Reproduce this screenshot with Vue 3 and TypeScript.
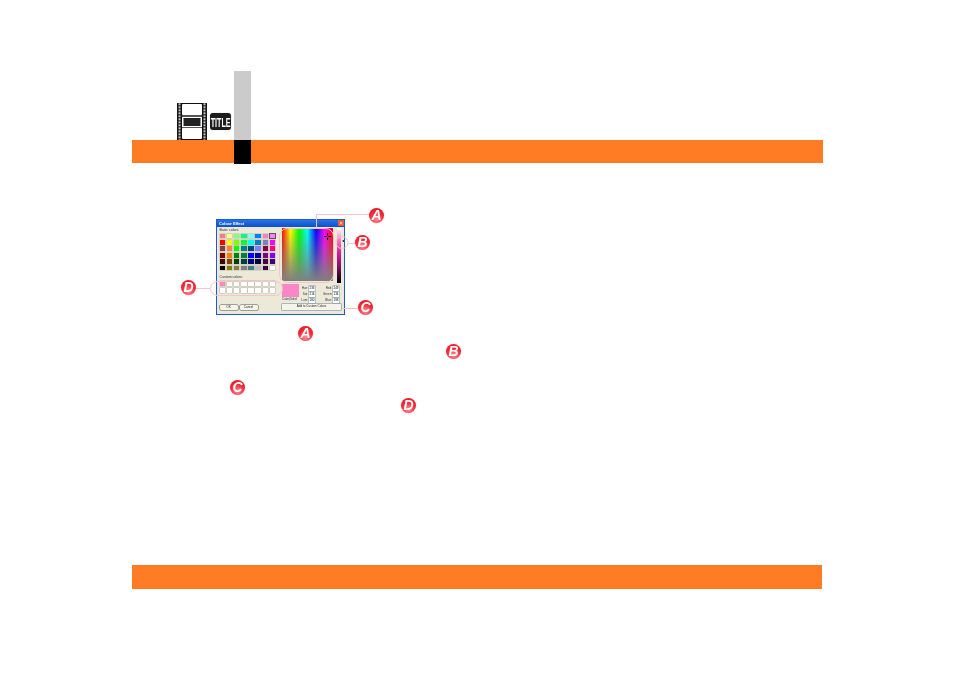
<script setup lang="ts">
const basic: string[] = [
  '#f08080','#ffff80','#80ff80','#00ff80','#80ffff','#0080ff','#ff80c0','#ff80ff',
  '#ff0000','#ffff00','#80ff00','#00ff40','#00ffff','#0080c0','#8080c0','#ff00ff',
  '#804040','#ff8040','#00ff00','#008080','#004080','#8080ff','#800040','#ff0080',
  '#800000','#ff8000','#008000','#008040','#0000ff','#0000a0','#800080','#8000ff',
  '#400000','#804000','#004000','#004040','#000080','#000040','#400040','#400080',
  '#000000','#808000','#808040','#808080','#408080','#c0c0c0','#400040','#ffffff'
]
const custom: string[] = Array.from({ length: 16 }, (_, i) => (i === 0 ? '#f986c6' : '#ffffff'))
const fields = [
  [{ l: 'Hue:', v: '233' }, { l: 'Red:', v: '249' }],
  [{ l: 'Sat:', v: '216' }, { l: 'Green:', v: '134' }],
  [{ l: 'Lum:', v: '180' }, { l: 'Blue:', v: '198' }]
]
</script>

<template>
  <main class="page">
    <header class="head">
      <div class="icons">
        <svg class="film" width="30" height="37" viewBox="0 0 30 37">
          <defs>
            <pattern id="holes" x="0" y="0.500" width="3" height="3" patternUnits="userSpaceOnUse">
              <rect x="0" y="0" width="3" height="1.500" fill="#fff" />
            </pattern>
          </defs>
          <rect width="30" height="37" fill="#111" />
          <rect x="1.500" y="0" width="2" height="37" fill="url(#holes)" />
          <rect x="26.500" y="0" width="2" height="37" fill="url(#holes)" />
          <rect x="5" y="12" width="20" height="14" fill="#555" />
          <g fill="#fff">
            <rect x="5" y="1" width="20" height="11" rx="1" />
            <rect x="5" y="25" width="20" height="11" rx="1" />
            <rect x="5" y="14" width="20" height="10" />
          </g>
          <rect x="6.500" y="15" width="17" height="8" fill="#222" />
        </svg>
        <div class="title-chip"><span>TITLE</span></div>
      </div>
      <div class="tab"></div>
    </header>
    <div class="band">
      <div class="tab-end"></div>
    </div>

    <section class="figure">
      <div class="dialog">
        <div class="titlebar"><span>Colour Effect</span><i class="close">×</i></div>
        <div class="left">
          <div class="cap">Basic colors:</div>
          <div class="swatches basic">
            <b v-for="(c, i) in basic" :key="i" :class="{ sel: i === 7 }" :style="{ background: c }"></b>
          </div>
          <div class="cap cap2">Custom colors:</div>
          <div class="swatches custom">
            <b v-for="(c, i) in custom" :key="i" :style="{ background: c }"></b>
          </div>
          <div class="btns"><button>OK</button><button>Cancel</button></div>
        </div>
        <div class="right">
          <div class="pickrow">
            <div class="spectrum"><div class="fade"></div><svg class="cross" width="7" height="7" viewBox="0 0 7 7"><path d="M3.500 0v2.500M3.500 4.500V7M0 3.500h2.500M4.500 3.500H7" stroke="#000" fill="none" /></svg></div>
            <div class="lum"></div>
            <div class="arrow"></div>
          </div>
          <div class="inforow">
            <div class="solidcol"><div class="solid"></div><span>Color|Solid</span></div>
            <div class="vals">
              <div v-for="(r, i) in fields" :key="i" class="valrow">
                <template v-for="f in r" :key="f.l"><span class="lab">{{ f.l }}</span><span class="inp">{{ f.v }}</span></template>
              </div>
            </div>
          </div>
          <button class="add">Add to Custom Colors</button>
        </div>
      </div>

      <!-- callouts over the screenshot, drawn in page coordinates -->
      <svg class="callouts" width="954" height="170" viewBox="0 163 954 170">
        <g fill="none" stroke="#f8c4c8" stroke-width="1">
          <path d="M316.500 228V214.500H370" />
          <rect x="279.500" y="228.500" width="54" height="54" rx="8" />
          <path d="M195 288.500H210" />
          <rect x="210.500" y="281.500" width="72" height="14" rx="7" />
          <circle cx="342" cy="242.500" r="6" />
          <path d="M348 243.500H356" />
          <path d="M342 308.500H358" />
        </g>
      </svg>
      <span class="badge pa">A</span>
      <span class="badge pb">B</span>
      <span class="badge pc">C</span>
      <span class="badge pd">D</span>
    </section>

    <section class="notes">
      <div class="line la"><span class="badge">A</span></div>
      <div class="line lb"><span class="badge">B</span></div>
      <div class="line"></div>
      <div class="line lc"><span class="badge">C</span></div>
      <div class="line ld"><span class="badge">D</span></div>
    </section>

    <footer class="foot"></footer>
  </main>
</template>

<style scoped>
.page { width: 954px; height: 674px; position: relative; overflow: hidden; background: #fff; font-family: "Liberation Sans", Arial, sans-serif; padding-top: 71px; box-sizing: border-box; }
.head { display: flex; align-items: flex-end; height: 69px; padding-left: 177px; }
.icons { display: flex; align-items: center; gap: 3px; width: 57px; height: 37px; }
.film { flex: none; }
.title-chip { flex: none; width: 21px; height: 17px; background: #1d1d1d; border-radius: 3px; box-shadow: 0 0 1px #999; color: #fff; text-align: center; overflow: hidden; }
.title-chip span { display: inline-block; margin: 0 -10px; font: 700 12px/17px "Liberation Sans", sans-serif; transform: scaleX(.6); }
.tab { width: 17px; height: 69px; background: #cbcbcb; }
.band { width: 691px; height: 23px; margin-left: 132px; background: #ff7b24; padding-left: 102px; box-sizing: border-box; }
.tab-end { width: 17px; height: 24px; background: #000; }

.figure { position: relative; height: 161px; }
.dialog { position: absolute; left: 216px; top: 56px; width: 129px; height: 96px; box-sizing: border-box; background: #ece9d8; border: 1px solid #1c5ad0; display: flex; flex-wrap: wrap; align-content: flex-start; filter: blur(.45px); overflow: hidden; }
.titlebar { width: 100%; height: 7px; background: linear-gradient(#2a72e6, #0c50cf); color: #fff; font: 700 4px/7px "Liberation Sans", sans-serif; padding-left: 2px; box-sizing: border-box; display: flex; justify-content: space-between; }
.close { width: 6px; height: 6px; background: #e0603c; font: 400 6px/6px "Liberation Sans", sans-serif; text-align: center; font-style: normal; }
.left { width: 65px; padding-left: 2.500px; box-sizing: border-box; }
.cap { font-size: 3.500px; line-height: 4px; color: #333; margin-top: 1px; height: 5.700px; }
.cap2 { margin-top: 5px; height: 5.900px; }
.swatches { display: grid; grid-template-columns: repeat(8, 5.500px); column-gap: 1.700px; }
.swatches b { display: block; height: 4.700px; box-shadow: 0 0 0 .5px #b9b7aa; }
.basic { row-gap: 1.700px; }
.custom { row-gap: 2px; }
.swatches .sel { box-shadow: 0 0 0 1px #555; }
.btns { display: flex; gap: 2px; margin-top: 12px; }
.btns button { width: 18px; height: 5.500px; padding: 0; border: 0; box-shadow: 0 0 0 .5px #555; background: #f5f4ea; font: 3px/5.500px "Liberation Sans", sans-serif; color: #222; border-radius: 1px; }
.right { width: 62px; }
.pickrow { display: flex; padding-top: 1px; position: relative; }
.spectrum { position: relative; width: 51px; height: 53px; background: linear-gradient(to right, #f00, #ff0, #0f0, #0ff, #00f, #f0f, #f00); }
.fade { position: absolute; inset: 0; background: linear-gradient(to bottom, rgba(128,128,128,0), rgba(128,128,128,1)); }
.cross { position: absolute; left: 42px; top: 5px; }
.lum { width: 3.500px; height: 55px; margin-left: 4px; background: linear-gradient(#fff, #f986c6 20%, #e0189c 45%, #7a1060 72%, #000); }
.arrow { width: 0; height: 0; margin-left: 0; margin-top: 12px; border: 1.500px solid transparent; border-right: 2px solid #000; }
.inforow { display: flex; margin-top: 1px; }
.solidcol { width: 18px; }
.solid { width: 17px; height: 13px; background: #f986c6; }
.solidcol span { display: block; font-size: 3px; line-height: 4px; color: #333; white-space: nowrap; }
.vals { display: flex; flex-direction: column; gap: 1px; padding-top: 2px; }
.valrow { display: flex; align-items: center; height: 5px; }
.lab { width: 8px; font-size: 3px; text-align: right; color: #333; margin-right: 1px; line-height: 5px; white-space: nowrap; }
.inp { width: 6px; height: 4.500px; background: #fff; box-shadow: 0 0 0 .5px #7f9db9; font-size: 3px; line-height: 4.500px; text-align: center; margin-right: 1px; }
.lab:nth-child(3) { margin-left: 7px; width: 9px; }
.add { display: block; width: 59px; height: 5.500px; padding: 0; margin-top: 1px; border: 0; box-shadow: 0 0 0 .5px #6a7ea5; background: #f5f4ea; font: 3px/5.500px "Liberation Sans", sans-serif; color: #222; }

.callouts { position: absolute; left: 0; top: 0; pointer-events: none; }
.badge { display: inline-block; width: 15px; height: 15px; border-radius: 50%; background: radial-gradient(circle at 50% 75%, #ff8a96 0, #f42a38 50%, #e01420 100%); color: #fff; font: italic 700 14px/15px "Liberation Sans", sans-serif; text-align: center; box-shadow: 0 0 1px #f7a0a8; filter: blur(.25px); }
.pa, .pb, .pc, .pd { position: absolute; }
.pa { left: 369px; top: 45px; }
.pb { left: 355px; top: 72px; }
.pc { left: 358px; top: 137px; }
.pd { left: 181px; top: 117px; }

.line { height: 18px; display: flex; align-items: center; }
.la { padding-left: 298px; }
.lb { padding-left: 446px; }
.lc { padding-left: 230px; }
.ld { padding-left: 401px; }
.foot { width: 690px; height: 24px; margin: 151px 0 0 132px; background: #ff7b24; }
</style>
